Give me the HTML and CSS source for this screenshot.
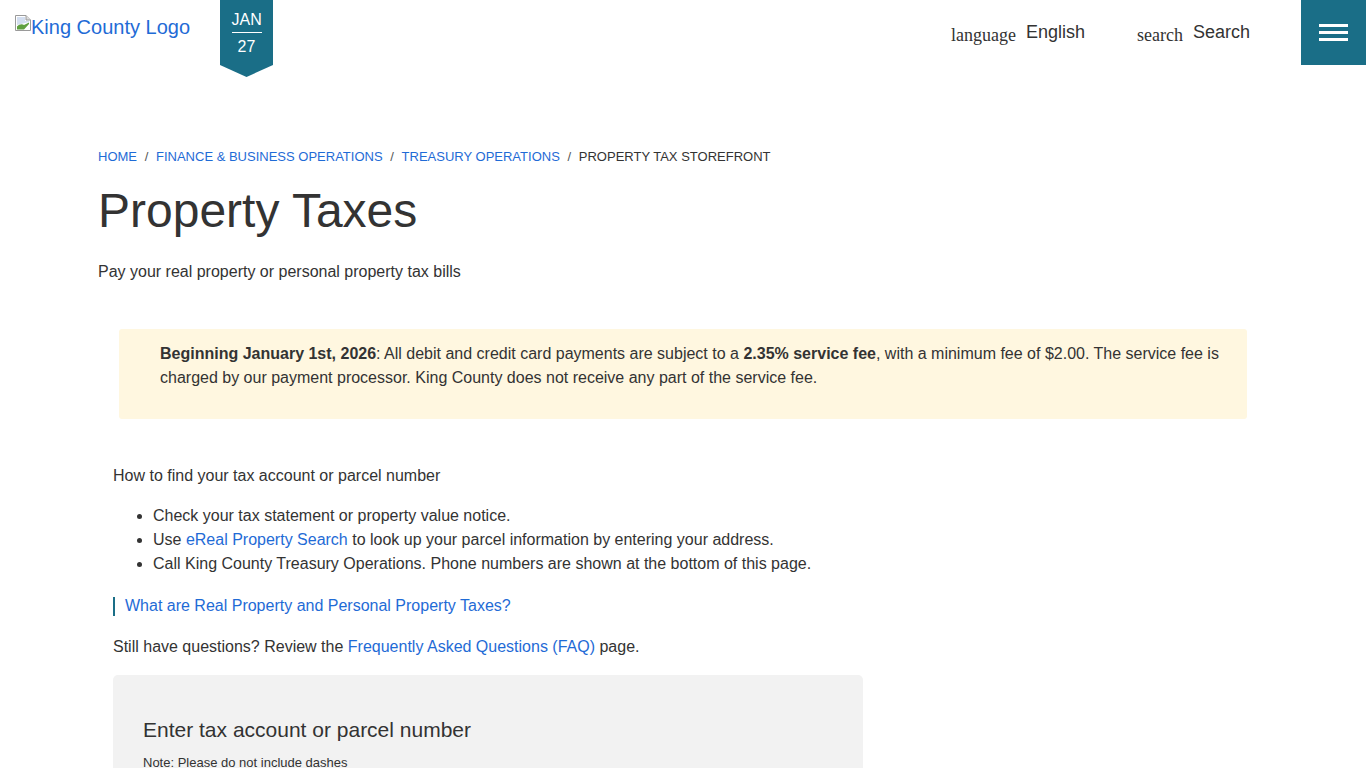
FILE: index.html
```html
<!DOCTYPE html>
<html lang="en">
<head>
<meta charset="utf-8">
<title>Property Taxes</title>
<link rel="stylesheet" href="styles.css">
</head>
<body>
<header class="site-header">
  <a class="logo" href="#">
    <svg class="broken-img" width="16" height="16" viewBox="0 0 16 16" aria-hidden="true">
      <path d="M0.5 0.5H11L15.5 5V15.5H0.5Z" fill="#fff" stroke="#9a9a9a"/>
      <path d="M11 0.5V5H15.5" fill="#dcdcdc" stroke="#9a9a9a"/>
      <path d="M2 2H10V6H14V7L2 10Z" fill="#d3def0"/>
      <path d="M2 14.5V11.5C4 9.5 7 8.5 9 10L14 7.5V9L9 14.5Z" fill="#5fa040"/>
    </svg><span>King County Logo</span>
  </a>
  <div class="date-ribbon">
    <span class="month">JAN</span>
    <span class="day">27</span>
  </div>
  <nav class="tools">
    <a class="tool tool-lang" href="#"><span class="tool-icon">language</span><span class="tool-label">English</span></a>
    <a class="tool tool-search" href="#"><span class="tool-icon">search</span><span class="tool-label">Search</span></a>
    <button class="burger" type="button" aria-label="Menu"><i></i><i></i><i></i></button>
  </nav>
</header>
<main class="page">
  <ol class="crumbs">
    <li><a href="#">HOME</a></li>
    <li><a href="#">FINANCE &amp; BUSINESS OPERATIONS</a></li>
    <li><a href="#">TREASURY OPERATIONS</a></li>
    <li>PROPERTY TAX STOREFRONT</li>
  </ol>
  <h1>Property Taxes</h1>
  <p class="lead">Pay your real property or personal property tax bills</p>
  <div class="notice">
    <p><strong>Beginning January 1st, 2026</strong>: All debit and credit card payments are subject to a <strong>2.35% service fee</strong>, with a minimum fee of $2.00. The service fee is charged by our payment processor. King County does not receive any part of the service fee.</p>
  </div>
  <section class="content">
    <p class="how">How to find your tax account or parcel number</p>
    <ul class="ways">
      <li>Check your tax statement or property value notice.</li>
      <li>Use <a href="#">eReal Property Search</a> to look up your parcel information by entering your address.</li>
      <li>Call King County Treasury Operations. Phone numbers are shown at the bottom of this page.</li>
    </ul>
    <p class="marked"><a href="#">What are Real Property and Personal Property Taxes?</a></p>
    <p class="faq">Still have questions? Review the <a href="#">Frequently Asked Questions (FAQ)</a> page.</p>
    <div class="lookup">
      <h2>Enter tax account or parcel number</h2>
      <p class="note">Note: Please do not include dashes</p>
    </div>
  </section>
</main>
</body>
</html>
```
FILE: styles.css
```css
html, body {
  margin: 0;
  padding: 0;
  height: 768px;
  overflow: hidden;
  background: #fff;
}
body {
  font-family: "Liberation Sans", Arial, sans-serif;
  font-size: 16px;
  line-height: 24px;
  color: #333;
}
a {
  color: #1f6bd6;
  text-decoration: none;
}
.site-header {
  display: flex;
  align-items: flex-start;
  height: 77px;
}
.logo {
  display: flex;
  align-items: flex-start;
  margin: 15px 0 0 15px;
  width: 205px;
  font-size: 20px;
  line-height: 24px;
}
.broken-img {
  flex: none;
}
.date-ribbon {
  width: 53px;
  height: 77px;
  box-sizing: border-box;
  padding-top: 9px;
  background: #1a6e87;
  color: #fff;
  text-align: center;
  clip-path: polygon(0 0, 100% 0, 100% 65px, 50% 100%, 0 65px);
  display: flex;
  flex-direction: column;
  align-items: center;
}
.month {
  width: 30px;
  height: 23px;
  border-bottom: 1px solid #fff;
  line-height: 22px;
}
.day {
  line-height: 28px;
}
.tools {
  margin-left: auto;
  display: flex;
  align-items: flex-start;
}
.tool {
  display: flex;
  color: #333;
  font-size: 18px;
  line-height: 24px;
  padding-top: 20px;
}
.tool-icon {
  font-family: "Liberation Serif", "Times New Roman", serif;
  padding-top: 3px;
  margin-right: 10px;
}
.tool-lang {
  margin-right: 52px;
}
.tool-search {
  margin-right: 51px;
}
.burger {
  width: 65px;
  height: 65px;
  padding: 24px 18px 0;
  border: 0;
  background: #1a6e87;
  display: flex;
  flex-direction: column;
  gap: 4px;
}
.burger i {
  display: block;
  height: 3px;
  background: #fff;
}
.page {
  padding: 69px 98px 0;
}
.crumbs {
  display: flex;
  list-style: none;
  margin: 0;
  padding: 0;
  font-size: 13px;
  line-height: 22px;
}
.crumbs li + li::before {
  content: "/";
  padding: 0 7.7px;
  color: #555;
}
h1 {
  margin: 17px 0 0;
  font-size: 48px;
  font-weight: 400;
  line-height: 52px;
}
.lead {
  margin: 23px 0 0;
}
.notice {
  margin: 45px 21px 0;
  height: 90px;
  box-sizing: border-box;
  padding: 13px 20px 0 41px;
  background: #fff7e0;
  border-radius: 3px;
}
.notice p {
  margin: 0;
}
.content {
  margin: 45px 0 0 15px;
}
.how {
  margin: 0;
}
.ways {
  margin: 16px 0 0;
  padding: 0 0 0 40px;
}
.marked {
  margin: 21px 0 0;
  padding: 0 0 2px 10px;
  border-left: 2px solid #1a6e87;
  line-height: 17px;
}
.faq {
  margin: 19px 0 0;
}
.lookup {
  margin-top: 16px;
  width: 750px;
  height: 300px;
  box-sizing: border-box;
  padding: 40px 30px;
  background: #f2f2f2;
  border-radius: 5px;
}
.lookup h2 {
  margin: 0;
  font-size: 21px;
  font-weight: 400;
  line-height: 30px;
}
.note {
  margin: 9px 0 0;
  font-size: 13px;
  line-height: 18px;
}
```
